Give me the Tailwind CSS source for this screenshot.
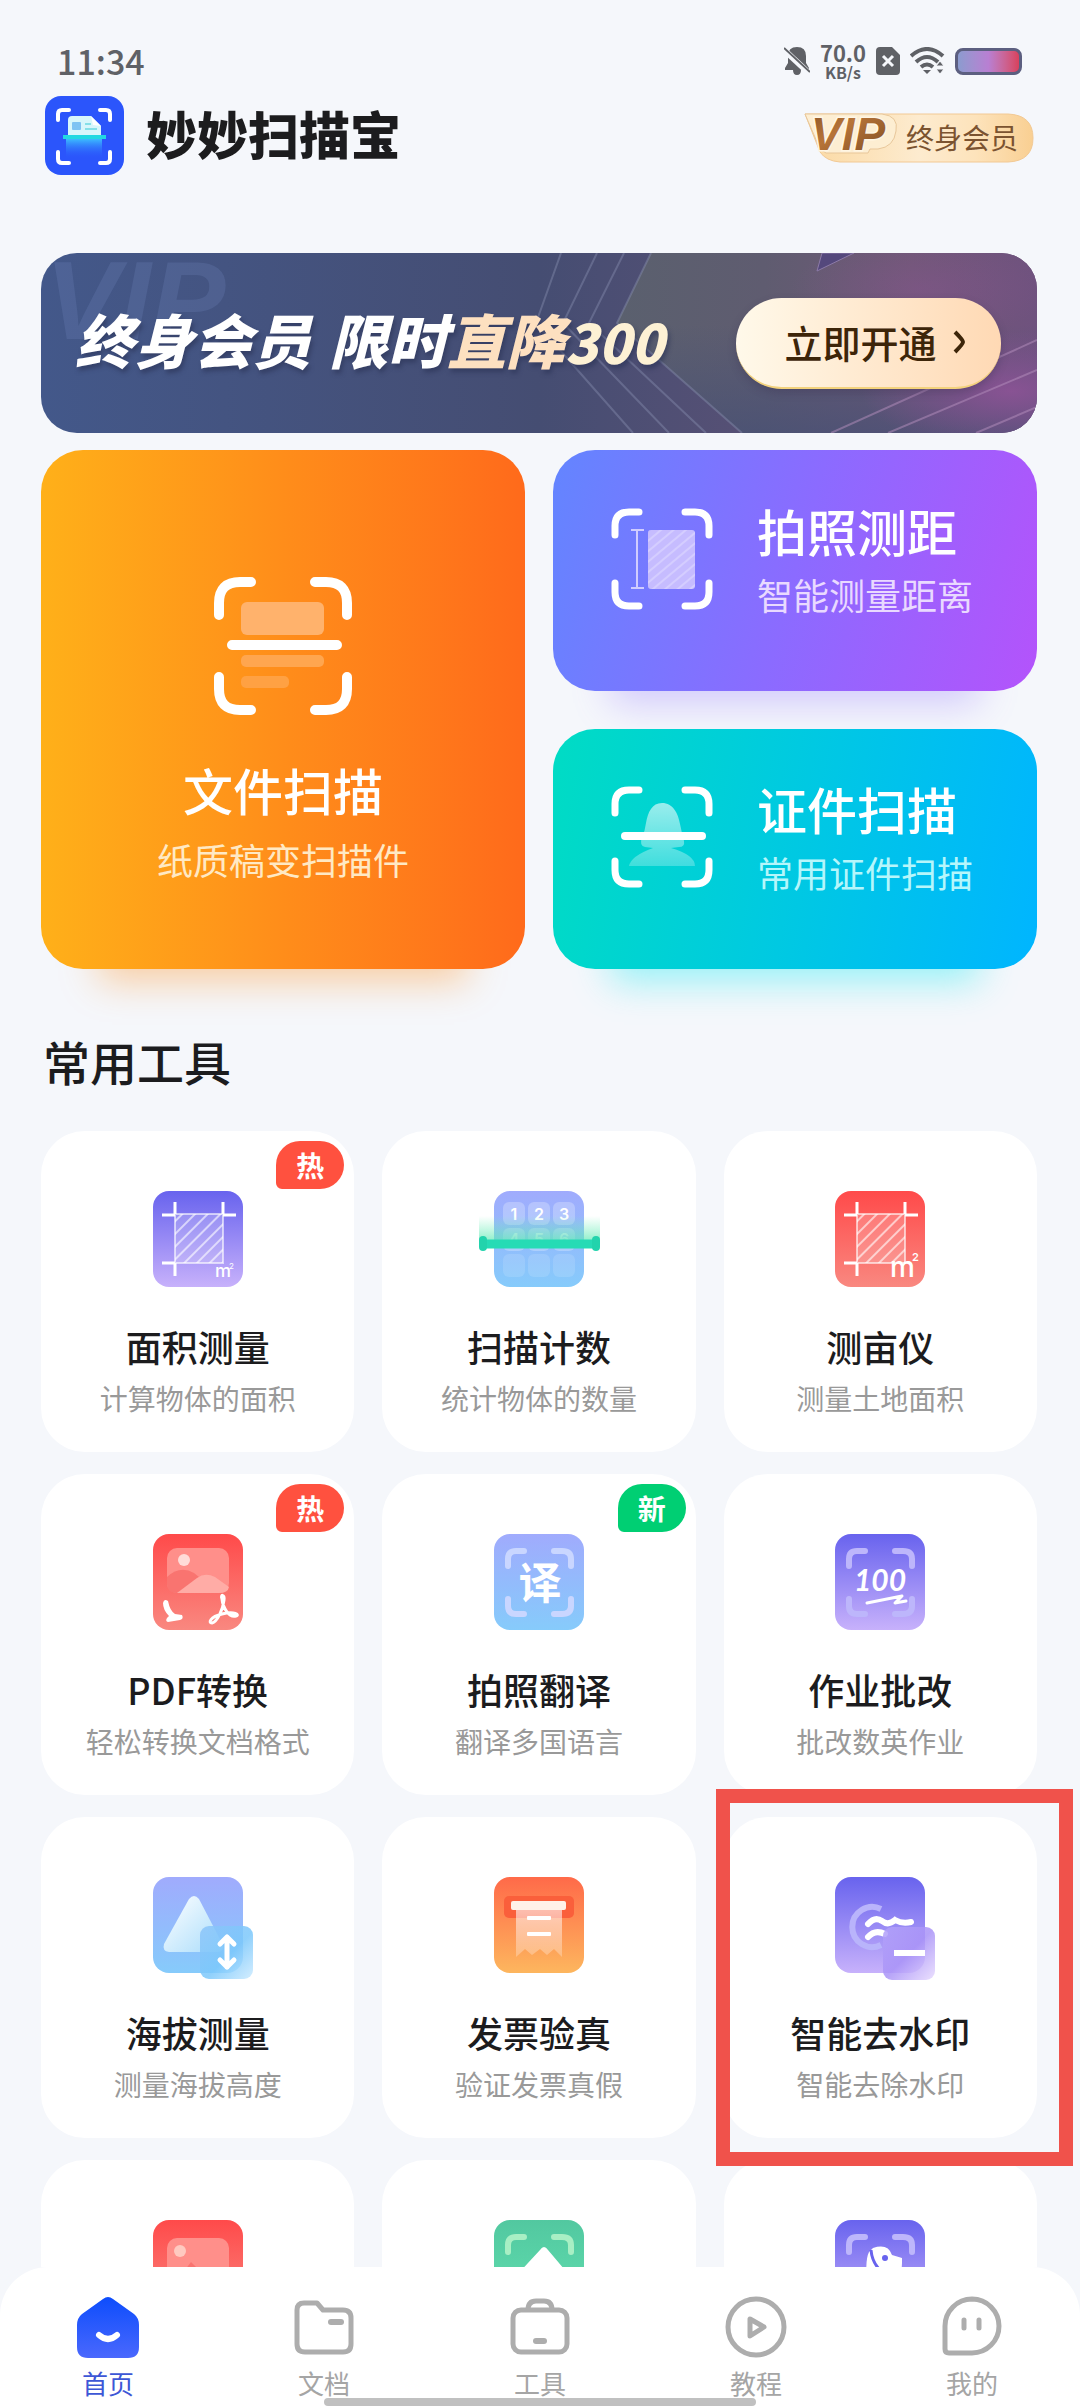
<!DOCTYPE html>
<html lang="zh-CN">
<head>
  <meta charset="UTF-8">
  <meta name="viewport" content="width=device-width, initial-scale=1.0">
  <title>妙妙扫描宝</title>
  <script src="https://cdn.jsdelivr.net/npm/@tailwindcss/browser@4"></script>
</head>
<body class="h-screen flex flex-col overflow-hidden bg-[#f5f7fb] text-[#1c1c1e] font-['Noto_Sans_CJK_SC',sans-serif]">

  <!-- shared gradients and shapes -->
  <svg class="absolute w-0 h-0" aria-hidden="true">
    <defs>
      <linearGradient id="g-purple" x1="0" y1="0" x2="0" y2="1"><stop offset="0" stop-color="#6863ee"/><stop offset="1" stop-color="#c7b1fb"/></linearGradient>
      <linearGradient id="g-red" x1="0" y1="0" x2="0" y2="1"><stop offset="0" stop-color="#ff4a4a"/><stop offset="1" stop-color="#f98880"/></linearGradient>
      <linearGradient id="g-blue" x1="0" y1="0" x2="0" y2="1"><stop offset="0" stop-color="#a0abfd"/><stop offset="1" stop-color="#86cbfb"/></linearGradient>
      <linearGradient id="g-orange" x1="0" y1="0" x2="0" y2="1"><stop offset="0" stop-color="#ff6a49"/><stop offset="1" stop-color="#fdb65e"/></linearGradient>
      <linearGradient id="g-green" x1="0" y1="0" x2="0" y2="1"><stop offset="0" stop-color="#52c8a0"/><stop offset="1" stop-color="#62e0b0"/></linearGradient>
      <linearGradient id="g-home" x1="0" y1="0" x2="0" y2="1"><stop offset="0" stop-color="#0d4dfc"/><stop offset="1" stop-color="#4a68fd"/></linearGradient>
      <linearGradient id="g-glow" x1="0" y1="0" x2="0" y2="1"><stop offset="0" stop-color="#6ff0b8" stop-opacity="0"/><stop offset="1" stop-color="#5fe8b4" stop-opacity=".7"/></linearGradient>
      <linearGradient id="g-fade" x1="0" y1="0" x2="0" y2="1"><stop offset="0" stop-color="#fff" stop-opacity=".6"/><stop offset="1" stop-color="#fff" stop-opacity=".25"/></linearGradient>
      <linearGradient id="g-peak" x1="0" y1="0" x2="1" y2="1"><stop offset="0" stop-color="#fff"/><stop offset="1" stop-color="#a8dcfb"/></linearGradient>
      <linearGradient id="g-tile-blue" x1="0" y1="0" x2="1" y2="1"><stop offset="0" stop-color="#8cc4f9"/><stop offset=".55" stop-color="#7cc8fb"/><stop offset="1" stop-color="#cdebff"/></linearGradient>
      <linearGradient id="g-tile-purple" x1="0" y1="0" x2="1" y2="1"><stop offset="0" stop-color="#b3a2fa"/><stop offset=".5" stop-color="#a993f7"/><stop offset="1" stop-color="#e8dbfe"/></linearGradient>
      <linearGradient id="g-scan" x1="0" y1="0" x2="0" y2="1"><stop offset="0" stop-color="#3fd0ff"/><stop offset="1" stop-color="#2b55fb" stop-opacity="0"/></linearGradient>
      <linearGradient id="g-gold" x1="0" y1="0" x2="1" y2="0"><stop offset="0" stop-color="#fbd9a2"/><stop offset=".5" stop-color="#fdebcf"/><stop offset=".75" stop-color="#fde3bb"/><stop offset="1" stop-color="#f9cf92"/></linearGradient>
      <linearGradient id="g-brown" x1="0" y1="0" x2="1" y2="1"><stop offset="0" stop-color="#8a5426"/><stop offset=".4" stop-color="#b77438"/><stop offset="1" stop-color="#7a4a22"/></linearGradient>
      <pattern id="hatch" width="9" height="9" patternUnits="userSpaceOnUse" patternTransform="rotate(45)"><path d="M1 0v9" stroke="#fff" stroke-opacity=".6" stroke-width="2"/></pattern>
      <pattern id="hatch-soft" width="8" height="8" patternUnits="userSpaceOnUse" patternTransform="rotate(50)"><path d="M1 0v8" stroke="#fff" stroke-opacity=".25" stroke-width="2"/></pattern>
      <symbol id="brackets" viewBox="0 0 102 102">
        <path d="M4 27V18Q4 4 18 4H28M74 4H84Q98 4 98 18V27M98 75V84Q98 98 84 98H74M28 98H18Q4 98 4 84V75" fill="none" stroke="currentColor" stroke-width="7" stroke-linecap="round"/>
      </symbol>
      <symbol id="corners" viewBox="0 0 90 96">
        <path d="M14 32V25Q14 17 22 17H30M60 17H68Q77 17 77 25V32M77 65V72Q77 80 68 80H60M30 80H22Q14 80 14 72V65" fill="none" stroke="currentColor" stroke-width="6" stroke-linecap="round"/>
      </symbol>
      <symbol id="plot" viewBox="0 0 90 96">
        <rect x="22" y="23" width="48" height="49" fill="#fff" fill-opacity=".2"/>
        <rect x="22" y="23" width="48" height="49" fill="url(#hatch)" stroke="#fff" stroke-opacity=".6" stroke-width="2"/>
        <path d="M22 11V23M70 11V23M9 24H22M70 24H83M9 72H22M22 72V85" stroke="#fff" stroke-width="3"/>
      </symbol>
    </defs>
  </svg>

  <div class="flex-1 min-h-0 overflow-y-auto [scrollbar-width:none] pl-[41px] pr-[43px]">

    <!-- status bar -->
    <div class="flex items-center justify-between pt-[38px] pb-[2px] pl-4 pr-[15px] h-[86px] text-[#5f6166]">
      <span class="text-[34px] leading-[46px] font-medium">11:34</span>
      <div class="flex items-center gap-[10px]">
        <svg class="w-[26px] h-[30px]" viewBox="0 0 26 30" fill="#5f6166">
          <path d="M4 10Q4 1 13 1Q22 1 22 10V17L25 22V24H17Q17 29 13 29Q9 29 9 24H1V22L4 17Z"/>
          <path d="M-1 3L26 28" stroke="#f5f7fb" stroke-width="6"/><path d="M0 2L26 26" stroke="#5f6166" stroke-width="2"/>
        </svg>
        <div class="text-center font-bold">
          <div class="text-[22px] leading-[22px]">70.0</div>
          <div class="text-[16px] leading-[18px]">KB/s</div>
        </div>
        <svg class="w-6 h-[28px]" viewBox="0 0 24 28"><path d="M4 0H16L24 8V24Q24 28 20 28H4Q0 28 0 24V4Q0 0 4 0Z" fill="#5f6166"/><path d="M7 9L17 19M17 9L7 19" stroke="#f5f7fb" stroke-width="3"/></svg>
        <svg class="w-[35px] h-[28px]" viewBox="0 0 35 28" fill="none" stroke="#5f6166" stroke-width="4">
          <path d="M1 9Q17 -5 33 9M6 15Q17 5 28 15M11 20Q17 15 23 20"/><path d="M13 23H21L17 27Z" fill="#5f6166" stroke="none"/><path d="M26 19L30 14L34 19ZM26 22L30 27L34 22Z" fill="#5f6166" stroke="#f5f7fb" stroke-width="1"/>
        </svg>
        <div class="w-[67px] h-[27px] rounded-lg border-3 border-[#5c5f80] bg-linear-to-r from-[#8b9bcf] via-[#b87fd2] to-[#d8405c]"></div>
      </div>
    </div>

    <!-- app header -->
    <header class="flex items-center justify-between mt-[10px] pl-1 pr-[3px]">
      <div class="flex items-center gap-[22px]">
        <svg class="w-[79px] h-[79px]" viewBox="0 0 79 79">
          <rect width="79" height="79" rx="16" fill="#2b55fb"/>
          <path d="M13 24V18Q13 14 17 14H24M55 14H61Q65 14 65 18V24M65 56V63Q65 67 61 67H55M24 67H17Q13 67 13 63V56" fill="none" stroke="#fff" stroke-width="4" stroke-linecap="round"/>
          <rect x="21" y="41" width="36" height="22" fill="url(#g-scan)"/>
          <path d="M23 40V24Q23 20 27 20H46L56 30V40Z" fill="#d8f6fb"/><path d="M46 20L56 30L48 29Z" fill="#fff"/>
          <rect x="27" y="26" width="9" height="8" rx="1" fill="#7ec3f3"/><path d="M40 28H46M40 33H52" stroke="#86e0e8" stroke-width="2"/>
          <path d="M18 41H61" stroke="#22d9e2" stroke-width="4"/>
        </svg>
        <h1 class="pb-[6px] text-[51px] leading-[60px] font-black">妙妙扫描宝</h1>
      </div>
      <button class="relative flex items-center w-[230px] h-[50px] mt-1 pl-[102px] text-[28px] leading-9 text-[#7b5330]">
        <svg class="absolute inset-0 w-full h-full overflow-visible" viewBox="0 0 230 50" aria-hidden="true">
          <path d="M1 1H204Q229 2 229 25Q229 48 204 49H36Q22 48 16 39Z" fill="url(#g-gold)" stroke="#f2c994" stroke-width="1"/>
          <path d="M1 1H78Q95 3 92 18Q90 34 74 36H66L64 40H22L16 36Z" fill="#fdeed2" stroke="#e8c79a" stroke-width="1"/>
          <text x="7" y="37" font-family="Liberation Sans" font-weight="700" font-style="italic" font-size="46" fill="url(#g-brown)" stroke="#fff6e4" stroke-width="3" paint-order="stroke">VIP</text>
        </svg>
        <span class="relative pb-[2px]">终身会员</span>
      </button>
    </header>

    <!-- membership banner -->
    <section class="relative flex items-center justify-between mt-[78px] h-[180px] pl-[34px] pr-9 rounded-[36px] overflow-hidden bg-linear-to-r from-[#43588a] via-[#454d72] to-[#6d5479]">
      <svg class="absolute inset-0 w-full h-full" viewBox="0 0 996 180" preserveAspectRatio="none" aria-hidden="true">
        <defs>
          <linearGradient id="g-side" x1="0" y1="0" x2="1" y2="0"><stop offset="0" stop-color="#5a606e"/><stop offset=".35" stop-color="#5f5c70"/><stop offset=".7" stop-color="#705877"/><stop offset="1" stop-color="#6f527e"/></linearGradient>
          <linearGradient id="g-under" x1="0" y1="0" x2="0" y2="1"><stop offset=".4" stop-color="#454f75" stop-opacity="0"/><stop offset="1" stop-color="#454f75" stop-opacity=".7"/></linearGradient>
          <radialGradient id="g-pink"><stop offset="0" stop-color="#8d5396" stop-opacity=".9"/><stop offset="1" stop-color="#8d5396" stop-opacity="0"/></radialGradient>
        </defs>
        <path d="M610 0H996V180H701L576 70Z" fill="url(#g-side)"/>
        <path d="M610 0H996V180H701L576 70Z" fill="url(#g-under)"/>
        <ellipse cx="970" cy="138" rx="150" ry="60" fill="url(#g-pink)"/>
        <ellipse cx="880" cy="36" rx="130" ry="50" fill="url(#g-pink)" fill-opacity=".4"/>
        <path d="M610 0L576 70L701 180M583 0L548 70L665 180M556 0L522 70L628 180M520 0L495 70L592 180" fill="none" stroke="#8d94b5" stroke-opacity=".4" stroke-width="2"/>
        <path d="M790 180L996 87M847 180L996 117M935 180L996 154" stroke="#b58fbe" stroke-opacity=".5" stroke-width="2"/>
        <path d="M781 0L776 18L813 0Z" fill="#54487c" stroke="#8c7aa8" stroke-width="1"/>
        <text x="4" y="86" font-family="Liberation Sans" font-weight="700" font-style="italic" font-size="112" fill="#6d83b8" fill-opacity=".28">VIP</text>
      </svg>
      <p class="relative flex gap-[18px] pb-[6px] text-[59px] leading-[72px] font-black italic text-white [text-shadow:2px_4px_4px_#2b335699]">
        <span>终身会员</span>
        <span>限时<span class="text-[#fde0c0]">直降</span><span class="text-[54px] text-[#fdf1d4]">300</span></span>
      </p>
      <button class="relative flex items-center justify-center gap-4 w-[265px] h-[91px] pl-3 rounded-full bg-linear-to-r from-[#fff9ea] to-[#ffd9b4] border-b-2 border-[#f3d27c] shadow-[0_4px_8px_#3a305055] text-[38px] leading-[56px] font-medium text-[#3d2509]">
        立即开通
        <svg class="w-3 h-6" viewBox="0 0 12 24" fill="none" stroke="#3d2509" stroke-width="4"><path d="M2 2Q10 10 10 12Q10 14 2 22"/></svg>
      </button>
    </section>

    <!-- main features -->
    <section class="grid grid-cols-2 gap-x-7 gap-y-[38px] mt-[17px] text-white">
      <a href="#" class="row-span-2 flex flex-col items-center pt-[127px] rounded-[42px] bg-linear-to-r from-[#ffb019] via-[#ff8d1a] to-[#ff6a1b] shadow-[0_70px_36px_-58px_#ff8c1a66]">
        <svg class="w-[138px] h-[138px]" viewBox="0 0 138 138">
          <path d="M5 38V26Q5 5 26 5H37M101 5H112Q133 5 133 26V38M133 100V112Q133 133 112 133H101M37 133H26Q5 133 5 112V100M18 68H123" fill="none" stroke="#fff" stroke-width="10" stroke-linecap="round"/>
          <rect x="27" y="25" width="83" height="33" rx="6" fill="#ffb26c"/><rect x="27" y="78" width="83" height="12" rx="5" fill="#ffa64f"/><rect x="27" y="99" width="48" height="12" rx="5" fill="#ffa143"/>
        </svg>
        <h2 class="mt-11 text-[50px] leading-[60px] font-medium">文件扫描</h2>
        <p class="mt-4 text-[36px] leading-[48px] text-[#ffe9c4]">纸质稿变扫描件</p>
      </a>
      <a href="#" class="flex items-center gap-11 h-[241px] pl-[58px] pb-6 rounded-[42px] bg-linear-[105deg] from-[#6385ff] via-[#8b6bff] to-[#b453fb] shadow-[0_70px_36px_-58px_#8b6bff55]">
        <svg class="w-[102px] h-[102px]" viewBox="0 0 102 102">
          <use href="#brackets"/>
          <path d="M20 22H33M20 80H33M26 22V80" stroke="#d0ccff" stroke-width="2"/>
          <rect x="37" y="22" width="47" height="59" rx="3" fill="#c6bcff"/><rect x="37" y="22" width="47" height="59" rx="3" fill="url(#hatch-soft)"/>
        </svg>
        <div>
          <h2 class="text-[50px] leading-[60px] font-medium">拍照测距</h2>
          <p class="mt-[10px] text-[36px] leading-[48px] text-[#e9d9ff]">智能测量距离</p>
        </div>
      </a>
      <a href="#" class="flex items-center gap-11 h-[240px] pl-[58px] pb-6 rounded-[42px] bg-linear-[100deg] from-[#00dcc4] via-[#00c9e2] to-[#00b5ff] shadow-[0_70px_36px_-58px_#00e8f066]">
        <svg class="w-[102px] h-[102px]" viewBox="0 0 102 102">
          <use href="#brackets"/>
          <path d="M51 17C62 17 67 27 69 38Q71 48 73 55Q74 61 68 61L60 62Q84 69 84 80H18Q20 70 42 62L34 61Q28 60 31 51Q34 45 35 37C37 26 41 17 51 17Z" fill="url(#g-fade)"/>
          <path d="M14 50H91" stroke="#fff" stroke-width="8" stroke-linecap="round"/>
        </svg>
        <div>
          <h2 class="text-[50px] leading-[60px] font-medium">证件扫描</h2>
          <p class="mt-[10px] text-[36px] leading-[48px] text-[#b5f6fb]">常用证件扫描</p>
        </div>
      </a>
    </section>

    <!-- tools -->
    <h2 class="mt-16 pl-[2px] text-[47px] leading-[56px] font-medium">常用工具</h2>
    <section class="grid grid-cols-3 gap-x-7 gap-y-[22px] mt-[42px] text-center">

      <a href="#" class="relative flex flex-col items-center pt-[60px] pb-9 rounded-[44px] bg-white">
        <span class="absolute top-[10px] right-[10px] w-[68px] rounded-3xl rounded-bl-md bg-[#ff513f] text-white text-[28px] leading-[48px] font-bold">热</span>
        <svg class="w-[90px] h-24" viewBox="0 0 90 96"><rect width="90" height="96" rx="16" fill="url(#g-purple)"/><use href="#plot"/><text x="62" y="86" font-family="Inter" font-size="18" font-weight="500" fill="#fff">m</text><text x="76" y="78" font-family="Inter" font-size="8" fill="#fff">2</text></svg>
        <h3 class="mt-[37px] text-[36px] leading-[44px] font-medium">面积测量</h3>
        <p class="mt-3 text-[28px] leading-9 text-[#999]">计算物体的面积</p>
      </a>

      <a href="#" class="relative flex flex-col items-center pt-[60px] pb-9 rounded-[44px] bg-white">
        <svg class="w-[90px] h-24 overflow-visible" viewBox="0 0 90 96">
          <rect width="90" height="96" rx="16" fill="url(#g-blue)"/>
          <g fill="#fff" fill-opacity=".25"><rect x="9" y="11" width="22" height="23" rx="6"/><rect x="34" y="11" width="22" height="23" rx="6"/><rect x="59" y="11" width="22" height="23" rx="6"/><rect x="9" y="37" width="22" height="23" rx="6"/><rect x="34" y="37" width="22" height="23" rx="6"/><rect x="59" y="37" width="22" height="23" rx="6"/></g>
          <g fill="#fff" fill-opacity=".13"><rect x="9" y="63" width="22" height="23" rx="6"/><rect x="34" y="63" width="22" height="23" rx="6"/><rect x="59" y="63" width="22" height="23" rx="6"/></g>
          <g font-family="Inter" font-size="16" font-weight="600" text-anchor="middle" fill="#fff"><text x="20" y="29">1</text><text x="45" y="29">2</text><text x="70" y="29">3</text><g fill-opacity=".6"><text x="20" y="54">4</text><text x="45" y="54">5</text><text x="70" y="54">6</text></g></g>
          <rect x="-15" y="25" width="121" height="25" fill="url(#g-glow)"/>
          <path d="M-11 53H102" stroke="#26dbb5" stroke-width="9"/><rect x="-15" y="45" width="8" height="15" rx="4" fill="#22d3ac"/><rect x="98" y="45" width="8" height="15" rx="4" fill="#22d3ac"/>
        </svg>
        <h3 class="mt-[37px] text-[36px] leading-[44px] font-medium">扫描计数</h3>
        <p class="mt-3 text-[28px] leading-9 text-[#999]">统计物体的数量</p>
      </a>

      <a href="#" class="relative flex flex-col items-center pt-[60px] pb-9 rounded-[44px] bg-white">
        <svg class="w-[90px] h-24" viewBox="0 0 90 96"><rect width="90" height="96" rx="16" fill="url(#g-red)"/><use href="#plot"/><text x="55" y="86" font-family="Inter" font-size="28" font-weight="500" fill="#fff">m</text><text x="77" y="70" font-family="Inter" font-size="11" font-weight="600" fill="#fff">2</text></svg>
        <h3 class="mt-[37px] text-[36px] leading-[44px] font-medium">测亩仪</h3>
        <p class="mt-3 text-[28px] leading-9 text-[#999]">测量土地面积</p>
      </a>

      <a href="#" class="relative flex flex-col items-center pt-[60px] pb-9 rounded-[44px] bg-white">
        <span class="absolute top-[10px] right-[10px] w-[68px] rounded-3xl rounded-bl-md bg-[#ff513f] text-white text-[28px] leading-[48px] font-bold">热</span>
        <svg class="w-[90px] h-24" viewBox="0 0 90 96">
          <rect width="90" height="96" rx="16" fill="url(#g-red)"/>
          <rect x="14" y="14" width="62" height="45" rx="10" fill="#ff8f8a"/>
          <circle cx="31" cy="26" r="6" fill="#ffdcd8"/>
          <path d="M14 43Q27 31 41 39L52 48L24 59Q14 59 14 50Z" fill="#f97470"/><path d="M24 59L44 44Q52 38 62 43L76 53Q75 59 66 59Z" fill="#ffaca6"/>
          <path d="M10 69Q11 64 15 67Q17 77 22 80L29 81Q31 85 27 86L15 88Q12 87 14 84L16 82Q10 76 10 69Z" fill="#fff"/>
          <path d="M69 65C67 60 72 60 71 66C70 76 64 88 59 89C55 89 57 83 69 80C82 77 87 81 83 82C76 84 70 74 69 65Z" fill="none" stroke="#fff" stroke-width="3"/>
        </svg>
        <h3 class="mt-[37px] text-[36px] leading-[44px] font-medium">PDF转换</h3>
        <p class="mt-3 text-[28px] leading-9 text-[#999]">轻松转换文档格式</p>
      </a>

      <a href="#" class="relative flex flex-col items-center pt-[60px] pb-9 rounded-[44px] bg-white">
        <span class="absolute top-[10px] right-[10px] w-[68px] rounded-3xl rounded-bl-md bg-[#00cf73] text-white text-[28px] leading-[48px] font-bold">新</span>
        <svg class="w-[90px] h-24" viewBox="0 0 90 96"><rect width="90" height="96" rx="16" fill="url(#g-blue)"/><use href="#corners" color="#c9d6ff"/><text x="46" y="65" text-anchor="middle" font-size="43" font-weight="700" fill="#fff">译</text></svg>
        <h3 class="mt-[37px] text-[36px] leading-[44px] font-medium">拍照翻译</h3>
        <p class="mt-3 text-[28px] leading-9 text-[#999]">翻译多国语言</p>
      </a>

      <a href="#" class="relative flex flex-col items-center pt-[60px] pb-9 rounded-[44px] bg-white">
        <svg class="w-[90px] h-24" viewBox="0 0 90 96"><rect width="90" height="96" rx="16" fill="url(#g-purple)"/><use href="#corners" color="#bdb6fb"/><text x="45" y="57" text-anchor="middle" font-family="Lato" font-size="30" font-weight="700" font-style="italic" fill="#fff">100</text><path d="M32 69L67 62L60 69L71 67" fill="none" stroke="#fff" stroke-width="3" stroke-linecap="round" stroke-linejoin="round"/></svg>
        <h3 class="mt-[37px] text-[36px] leading-[44px] font-medium">作业批改</h3>
        <p class="mt-3 text-[28px] leading-9 text-[#999]">批改数英作业</p>
      </a>

      <a href="#" class="relative flex flex-col items-center pt-[60px] pb-9 rounded-[44px] bg-white">
        <svg class="w-[90px] h-24 overflow-visible" viewBox="0 0 90 96">
          <rect width="90" height="96" rx="16" fill="url(#g-blue)"/>
          <path d="M36 22Q41 16 46 22L70 68Q71 75 65 75H16Q9 74 11 67Z" fill="url(#g-peak)"/>
          <rect x="47" y="49" width="53" height="53" rx="9" fill="url(#g-tile-blue)" fill-opacity=".85"/>
          <path d="M74 60V90M67 67L74 60L81 67M67 83L74 90L81 83" fill="none" stroke="#fff" stroke-width="5" stroke-linecap="round" stroke-linejoin="round"/>
        </svg>
        <h3 class="mt-[37px] text-[36px] leading-[44px] font-medium">海拔测量</h3>
        <p class="mt-3 text-[28px] leading-9 text-[#999]">测量海拔高度</p>
      </a>

      <a href="#" class="relative flex flex-col items-center pt-[60px] pb-9 rounded-[44px] bg-white">
        <svg class="w-[90px] h-24" viewBox="0 0 90 96">
          <rect width="90" height="96" rx="16" fill="url(#g-orange)"/>
          <rect x="10" y="19" width="70" height="22" rx="5" fill="#fa5f3b"/>
          <path d="M22 32H68V80L60 72L53 78L46 72L38 78L31 72L22 80Z" fill="url(#g-fade)"/>
          <rect x="17" y="24" width="55" height="9" rx="2" fill="#fff1e8"/><rect x="33" y="39" width="24" height="4" rx="1" fill="#fff"/><rect x="33" y="55" width="24" height="4" rx="1" fill="#fff"/>
        </svg>
        <h3 class="mt-[37px] text-[36px] leading-[44px] font-medium">发票验真</h3>
        <p class="mt-3 text-[28px] leading-9 text-[#999]">验证发票真假</p>
      </a>

      <a href="#" class="relative z-10 flex flex-col items-center pt-[60px] pb-9 rounded-[44px] bg-white">
        <!-- highlight frame -->
        <span class="absolute -top-7 -bottom-7 -left-2 -right-9 border-14 border-[#f0524b]"></span>
        <svg class="w-[90px] h-24 overflow-visible" viewBox="0 0 90 96">
          <rect width="90" height="96" rx="16" fill="url(#g-purple)"/>
          <path d="M46 32A20 20 0 1 0 46 68" fill="none" stroke="#b9b4fb" stroke-width="6"/>
          <path d="M33 47Q40 39 47 44Q53 49 60 43Q67 47 76 45M33 60Q40 52 50 57" fill="none" stroke="#fff" stroke-width="6" stroke-linecap="round"/>
          <rect x="48" y="50" width="52" height="53" rx="9" fill="url(#g-tile-purple)" fill-opacity=".85"/>
          <path d="M59 76H90" stroke="#fff" stroke-width="6"/>
        </svg>
        <h3 class="mt-[37px] text-[36px] leading-[44px] font-medium">智能去水印</h3>
        <p class="mt-3 text-[28px] leading-9 text-[#999]">智能去除水印</p>
      </a>

      <a href="#" class="flex flex-col items-center h-80 pt-[60px] rounded-[44px] bg-white">
        <svg class="w-[90px] h-24" viewBox="0 0 90 96"><rect width="90" height="96" rx="16" fill="url(#g-red)"/><rect x="14" y="18" width="62" height="60" rx="10" fill="#ff8f8a"/><circle cx="27" cy="31" r="6" fill="#ffc9c0"/><path d="M26 58L38 42L56 60Z" fill="#f97470"/></svg>
      </a>
      <a href="#" class="flex flex-col items-center h-80 pt-[60px] rounded-[44px] bg-white">
        <svg class="w-[90px] h-24" viewBox="0 0 90 96"><rect width="90" height="96" rx="16" fill="url(#g-green)"/><use href="#corners" color="#a8efc4"/><path d="M46 30Q50 24 54 30L76 56H22Z" fill="#fff"/></svg>
      </a>
      <a href="#" class="flex flex-col items-center h-80 pt-[60px] rounded-[44px] bg-white">
        <svg class="w-[90px] h-24" viewBox="0 0 90 96"><rect width="90" height="96" rx="16" fill="url(#g-purple)"/><use href="#corners" color="#bdb6fb"/><path d="M38 28Q53 23 57 35L67 38V43L66 60H32Q30 40 34 32Z" fill="#fff"/><path d="M36 30Q37 42 45 50" fill="none" stroke="#6863ee" stroke-width="3"/><circle cx="50" cy="38" r="3" fill="#6863ee"/></svg>
      </a>
    </section>
  </div>

  <!-- bottom tabs -->
  <nav class="relative grid grid-cols-5 pt-7 pb-[7px] rounded-t-[48px] bg-white text-center text-[26px] leading-9 text-[#a5a5a5]">
    <a href="#" class="flex flex-col items-center gap-[6px] text-[#3d57d6]">
      <svg class="w-16 h-16" viewBox="0 0 64 64"><path d="M27 4Q32 0 37 4L58 19Q63 23 63 30V52Q63 63 52 63H12Q1 63 1 52V30Q1 23 6 19Z" fill="url(#g-home)"/><path d="M23 40Q32 48 41 40" fill="none" stroke="#fff" stroke-width="6" stroke-linecap="round"/></svg>
      首页
    </a>
    <a href="#" class="flex flex-col items-center gap-[6px]">
      <svg class="w-16 h-16" viewBox="0 0 64 64" fill="none" stroke="#adadad" stroke-width="5"><path d="M12 8H25L31 15H51Q59 15 59 23V49Q59 57 51 57H13Q5 57 5 49V15Q5 8 12 8Z" stroke-linejoin="round"/><path d="M39 27H49" stroke-width="6" stroke-linecap="round"/></svg>
      文档
    </a>
    <a href="#" class="flex flex-col items-center gap-[6px]">
      <svg class="w-16 h-16" viewBox="0 0 64 64" fill="none" stroke="#adadad" stroke-width="5"><rect x="5" y="15" width="54" height="42" rx="8"/><path d="M20 15Q20 6 28 6H36Q44 6 44 15"/><path d="M28 46H36" stroke-width="6" stroke-linecap="round"/></svg>
      工具
    </a>
    <a href="#" class="flex flex-col items-center gap-[6px]">
      <svg class="w-16 h-16" viewBox="0 0 64 64" fill="none" stroke="#adadad" stroke-width="5" stroke-linejoin="round"><circle cx="32" cy="32" r="28"/><path d="M26 24V41L40 32Z"/></svg>
      教程
    </a>
    <a href="#" class="flex flex-col items-center gap-[6px]">
      <svg class="w-16 h-16" viewBox="0 0 64 64" fill="none" stroke="#adadad" stroke-width="5" stroke-linejoin="round"><path d="M32 4A27 27 0 0 1 32 58H9Q5 58 5 54V31A27 27 0 0 1 32 4Z"/><path d="M24 25V33M39 25V33" stroke-width="5" stroke-linecap="round"/></svg>
      我的
    </a>
    <div class="absolute bottom-[2px] left-[30%] right-[30%] h-2 rounded-full bg-[#c0c0c0]"></div>
  </nav>

</body>
</html>
